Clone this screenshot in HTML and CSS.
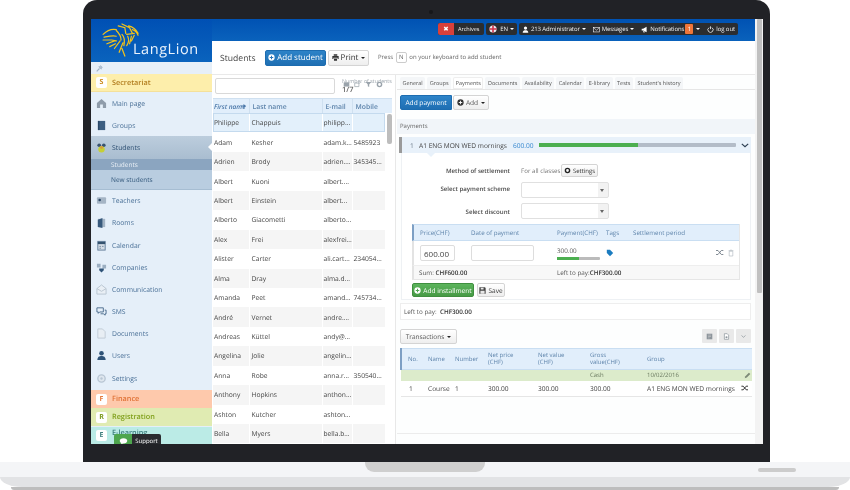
FILE: index.html
```html
<!DOCTYPE html>
<html lang="en">
<head>
<meta charset="utf-8">
<title>LangLion - Students</title>
<link rel="stylesheet" href="styles.css">
</head>
<body>
<div class="laptop">
  <div class="bezel">
    <div class="screen">
      <aside class="side">
        <div class="logo">
          <svg class="lion" viewBox="0 0 42 36" width="40" height="34" fill="none" stroke="#f2c21a" stroke-width="1.3" stroke-linecap="round">
            <path d="M1 12C5 8 10 6 15 7M2 15c5-1 9-2 13-1M1 18l9 0 5 1M5 22l8-3M8 25l6-3M17 3l7 2 1 6M21 1l8 4 3 6M28 3c5 1 8 4 10 8M32 7c3 1 5 3 6 6M15 8c3 3 5 6 5 10M21 12c3 3 3 7 2 12M13 27l6-8M18 31l4-10M24 35l-3-8M27 14c2 4 1 7-1 10M31 14l-2 8M34 13l-3 6M26 12l8-1"/>
          </svg>
          <span class="brand">LangLion</span>
        </div>
        <div class="pin">
          <svg viewBox="0 0 10 10" width="7" height="7"><path d="M1 9l4-4M4 2l4 4M6 1l3 3" stroke="#9fb1c4" stroke-width="1.6" fill="none"/></svg>
        </div>
        <div class="cat cat-s"><b class="letter">S</b>Secretariat</div>
        <nav class="menu">
          <a class="item"><svg class="ic" viewBox="0 0 12 12"><path d="M6 1L1 5.5V11h10V5.5zM4.5 7h3v4h-3z" fill="#8f9caa" fill-rule="evenodd"/></svg>Main page</a>
          <a class="item"><svg class="ic" viewBox="0 0 12 12"><path d="M2 1h8v10H2z" fill="#3d5f82"/><path d="M3 1v10" stroke="#24405c"/></svg>Groups</a>
          <a class="item item-on"><svg class="ic" viewBox="0 0 12 12"><circle cx="3.5" cy="3.5" r="2" fill="#39536f"/><circle cx="8.5" cy="3.5" r="2" fill="#39536f"/><circle cx="6" cy="8" r="3.5" fill="#c5cf35"/><circle cx="6" cy="6" r="1.6" fill="#d89a3d"/></svg>Students</a>
          <a class="sub sub-a">Students</a>
          <a class="sub sub-b">New students</a>
          <a class="item"><svg class="ic" viewBox="0 0 12 12"><rect x="1" y="2.5" width="10" height="7" rx="1" fill="#a5b5c5"/><circle cx="4" cy="5.5" r="1.4" fill="#2f4b68"/></svg>Teachers</a>
          <a class="item"><svg class="ic" viewBox="0 0 12 12"><path d="M2 2h8v9H2z" fill="#a3b4c5"/><path d="M2 3l5-2v11l-5-1z" fill="#37597c"/></svg>Rooms</a>
          <a class="item"><svg class="ic" viewBox="0 0 12 12"><rect x="2" y="1.5" width="8" height="9.5" fill="#d5dde6" stroke="#5f7b98"/><path d="M2 2h8v2.5H2z" fill="#35536f"/><path d="M4 7h1M7 7h1M4 9h1" stroke="#35536f"/></svg>Calendar</a>
          <a class="item"><svg class="ic" viewBox="0 0 12 12"><path d="M1 2h4v4H1zM7 3h4v4H7z" fill="#9cafc2"/><path d="M3.5 7h5v2L6 11.5 3.5 9z" fill="#2f5378"/></svg>Companies</a>
          <a class="item"><svg class="ic" viewBox="0 0 12 12"><path d="M1 5l5-4 5 4v6H1z" fill="#e9eff5" stroke="#b8c4d0"/><path d="M1 5l5 3 5-3" fill="none" stroke="#b8c4d0"/></svg>Communication</a>
          <a class="item"><svg class="ic" viewBox="0 0 12 12" fill="none" stroke="#47688a"><path d="M1 2h7v4.5H4L2.5 8V6.5H1z"/><path d="M9.5 4.500H11v4h-1V10L8 8.500H5"/></svg>SMS</a>
          <a class="item"><svg class="ic" viewBox="0 0 12 12"><path d="M2 1h5l3 3v7H2z" fill="#e8eef4" stroke="#bfcad5"/></svg>Documents</a>
          <a class="item"><svg class="ic" viewBox="0 0 12 12"><circle cx="6" cy="3.5" r="2.5" fill="#2f5378"/><path d="M1.500 11c0-3.500 2-4.500 4.500-4.500s4.500 1 4.500 4.500z" fill="#2f5378"/></svg>Users</a>
          <a class="item"><svg class="ic" viewBox="0 0 12 12"><circle cx="6" cy="6" r="4" fill="#dfe7ef" stroke="#b8c6d4" stroke-width="1.5"/><circle cx="6" cy="6" r="1.3" fill="#b8c6d4"/></svg>Settings</a>
        </nav>
        <div class="cat cat-f"><b class="letter">F</b>Finance</div>
        <div class="cat cat-r"><b class="letter">R</b>Registration</div>
        <div class="cat cat-e"><b class="letter">E</b><span class="elearn">E-learning</span></div>
        <div class="support">
          <span class="sup-ic"><svg viewBox="0 0 12 12" width="9" height="9"><path d="M6 1.5c3 0 5 1.500 5 3.500s-2 3.500-5 3.500H5L3 10.500V8C2 7.500 1 6.300 1 5c0-2 2-3.500 5-3.500z" fill="#fff"/></svg></span>
          <span class="sup-tx">Support</span>
        </div>
      </aside>

      <main class="main">
        <header class="topbar">
          <div class="tb-group"><span class="tb-x">✖</span><span class="tb-cell tb-arch">Archives</span></div>
          <div class="tb-group"><span class="tb-cell"><svg class="flag" viewBox="0 0 10 10"><circle cx="5" cy="5" r="4.5" fill="#e9e9ef"/><path d="M5 .5v9M.5 5h9" stroke="#d2334a" stroke-width="2"/></svg>EN<i class="caret"></i></span></div>
          <div class="tb-group tb-wide">
            <span class="tb-cell"><svg class="tb-ic" viewBox="0 0 10 10"><circle cx="5" cy="3" r="2.3" fill="#fff"/><path d="M1 9.500C1 6.500 3 6 5 6s4 .5 4 3.500z" fill="#fff"/></svg>213 Administrator<i class="caret"></i></span>
            <span class="tb-cell"><svg class="tb-ic" viewBox="0 0 10 10" fill="none" stroke="#fff" stroke-width=".8"><rect x=".5" y="2" width="9" height="6.5"/><path d="M.5 2L5 6l4.500-4"/></svg>Messages<i class="caret"></i></span>
            <span class="tb-cell"><svg class="tb-ic" viewBox="0 0 10 10"><path d="M1 4h2l5-3v8L3 6.500H1zM3 7l1 2.500h1L4.500 7z" fill="#fff"/></svg>Notifications<em class="badge">1</em><i class="caret"></i></span>
            <span class="tb-cell"><svg class="tb-ic" viewBox="0 0 10 10" fill="none" stroke="#fff" stroke-width="1.1"><path d="M3 2.300a3.700 3.700 0 1 0 4 0M5 .5v4"/></svg>log out</span>
          </div>
        </header>

        <div class="page">
          <div class="titlebar">
            <h1 class="title">Students</h1>
            <button class="btn btn-blue btn-add"><svg class="bi" viewBox="0 0 10 10"><circle cx="5" cy="5" r="4.5" fill="#fff"/><path d="M5 2.500v5M2.500 5h5" stroke="#2473b8" stroke-width="1.4"/></svg>Add student</button>
            <button class="btn btn-print"><svg class="bi" viewBox="0 0 10 10"><path d="M2.500.5h5v2h-5zM.5 3h9v4H8V5.500H2V7H.5zM2.800 6.300h4.400v3.200H2.800z" fill="#333"/></svg>Print<i class="caret dark"></i></button>
            <span class="hint">Press <kbd class="key">N</kbd> on your keyboard to add student</span>
          </div>

          <div class="cols">
            <section class="list">
              <div class="listtools">
                <input class="search" type="text" aria-label="Search">
                <div class="count"><span class="count-l">Number of students</span><span class="count-n">1/7</span></div>
                <div class="tools">
                  <svg viewBox="0 0 10 10"><path d="M1 2h8v6H1z" fill="#9aa3ab"/></svg>
                  <svg viewBox="0 0 10 10" fill="none" stroke="#9aa3ab"><path d="M1 3h6v5H1zM7 4l2-2"/></svg>
                  <svg viewBox="0 0 10 10"><path d="M1 1.500h8L6 5v3.500L4 7.500V5z" fill="#9aa3ab"/></svg>
                  <svg viewBox="0 0 10 10"><circle cx="5" cy="5" r="3" fill="none" stroke="#9aa3ab" stroke-width="2"/></svg>
                </div>
              </div>
              <div class="tablewrap">
                <table class="students">
                  <thead><tr><th class="c1 sorted">First name<svg class="sortarrow" viewBox="0 0 10 8"><path d="M0 3h5V0l5 4-5 4V5H0z" fill="#4a77a8"/></svg></th><th class="c2">Last name</th><th class="c3">E-mail</th><th class="c4">Mobile</th></tr></thead>
                  <tbody>
                    <tr class="sel"><td>Philippe</td><td>Chappuis</td><td>philipp...</td><td></td></tr>
                    <tr><td>Adam</td><td>Kesher</td><td>adam.k...</td><td>5485923</td></tr>
                    <tr><td>Adrien</td><td>Brody</td><td>adrien....</td><td>345345...</td></tr>
                    <tr><td>Albert</td><td>Kuoni</td><td>albert....</td><td></td></tr>
                    <tr><td>Albert</td><td>Einstein</td><td>albert...</td><td></td></tr>
                    <tr><td>Alberto</td><td>Giacometti</td><td>alberto...</td><td></td></tr>
                    <tr><td>Alex</td><td>Frei</td><td>alexfrei...</td><td></td></tr>
                    <tr><td>Alister</td><td>Carter</td><td>ali.cart...</td><td>234054...</td></tr>
                    <tr><td>Alma</td><td>Dray</td><td>alma.d...</td><td></td></tr>
                    <tr><td>Amanda</td><td>Peet</td><td>amand...</td><td>745734...</td></tr>
                    <tr><td>André</td><td>Vernet</td><td>andre....</td><td></td></tr>
                    <tr><td>Andreas</td><td>Küttel</td><td>andy@...</td><td></td></tr>
                    <tr><td>Angelina</td><td>Jolie</td><td>angelin...</td><td></td></tr>
                    <tr><td>Anna</td><td>Robe</td><td>anna.r...</td><td>350540...</td></tr>
                    <tr><td>Anthony</td><td>Hopkins</td><td>anthon...</td><td></td></tr>
                    <tr><td>Ashton</td><td>Kutcher</td><td>ashton...</td><td></td></tr>
                    <tr><td>Bella</td><td>Myers</td><td>bella.b...</td><td></td></tr>
                  </tbody>
                </table>
                <div class="vscroll"><div class="vhead"></div><div class="vthumb"></div></div>
              </div>
            </section>

            <section class="detail">
              <div class="tabs">
                <span class="tab">General</span><span class="tab">Groups</span><span class="tab tab-on">Payments</span><span class="tab">Documents</span><span class="tab">Availability</span><span class="tab">Calendar</span><span class="tab">E-library</span><span class="tab">Tests</span><span class="tab">Student's history</span>
              </div>
              <div class="actions">
                <button class="btn btn-blue btn-pay">Add payment</button>
                <button class="btn btn-addm"><svg class="bi" viewBox="0 0 10 10"><circle cx="5" cy="5" r="4.5" fill="#333"/><path d="M5 2.500v5M2.500 5h5" stroke="#fff" stroke-width="1.3"/></svg>Add<i class="caret dark"></i></button>
              </div>
              <div class="sectbar">Payments</div>
              <div class="payrow">
                <span class="pn">1</span><span class="pt">A1 ENG MON WED mornings</span><span class="pv">600.00</span>
                <span class="pbar"><span class="pfill"></span></span>
                <svg class="chev" viewBox="0 0 10 6" width="8" height="5"><path d="M1 1l4 3.500L9 1" fill="none" stroke="#2c3e50" stroke-width="1.5"/></svg>
              </div>
              <div class="paybody">
                <div class="frow frow-1"><label class="flab">Method of settlement</label><span class="fnote">For all classes</span><button class="btn btn-set"><svg class="bi" viewBox="0 0 10 10"><circle cx="5" cy="5" r="3" fill="none" stroke="#222" stroke-width="2"/></svg>Settings</button></div>
                <div class="frow frow-2"><label class="flab">Select payment scheme</label><span class="sel-box"><i class="sel-arrow"></i></span></div>
                <div class="frow frow-3"><label class="flab flab-d">Select discount</label><span class="sel-box"><i class="sel-arrow"></i></span></div>
                <div class="inst">
                  <div class="inst-h"><span class="w-a">Price(CHF)</span><span class="w-b">Date of payment</span><span class="w-c">Payment(CHF)</span><span class="w-d">Tags</span><span>Settlement period</span></div>
                  <div class="inst-r">
                    <span class="w-a"><input class="inp inp-p" type="text" value="600.00" aria-label="Price"></span>
                    <span class="w-b"><input class="inp inp-d" type="text" aria-label="Date"></span>
                    <span class="w-c"><span class="pay-v">300.00</span><span class="mini"><span class="mini-f"></span></span></span>
                    <span class="w-d"><svg viewBox="0 0 10 10" width="8" height="8"><path d="M1 1h4l4 4-4 4-4-4z" fill="#1b7cc0"/></svg></span>
                    <span class="rowicons">
                      <svg viewBox="0 0 12 10" width="8" height="7" fill="none" stroke="#66717c" stroke-width="1.2"><path d="M0 2h3l5 6h3M0 8h3l5-6h3"/></svg>
                      <svg viewBox="0 0 10 12" width="6" height="8" fill="none" stroke="#aab2ba"><path d="M2 3h6v8H2zM1 2h8M4 1h2"/></svg>
                    </span>
                  </div>
                  <div class="inst-s"><span class="w-ab">Sum: <b>CHF600.00</b></span><span>Left to pay:<b>CHF300.00</b></span></div>
                </div>
                <div class="instbtns">
                  <button class="btn btn-green"><svg class="bi" viewBox="0 0 10 10"><circle cx="5" cy="5" r="4.5" fill="#fff"/><path d="M5 2.500v5M2.500 5h5" stroke="#4ea64e" stroke-width="1.4"/></svg>Add installment</button>
                  <button class="btn btn-save"><svg class="bi" viewBox="0 0 10 10"><path d="M.5.5h8l1 1v8h-9z" fill="#444"/><path d="M2.500 1h4v2.500h-4zM2 5.500h6v4H2z" fill="#e8e8e8"/></svg>Save</button>
                </div>
              </div>
              <div class="leftpay">Left to pay: &nbsp;<b>CHF300.00</b></div>
              <div class="transbar">
                <button class="btn btn-trans">Transactions<i class="caret dark"></i></button>
                <span class="transicons">
                  <span class="gbtn"><svg viewBox="0 0 10 10" width="7" height="7"><path d="M1 1h8v8H1z" fill="#8d959c"/><path d="M3 3h4M3 5h4M3 7h2" stroke="#ddd" stroke-width=".7"/></svg></span>
                  <span class="gbtn"><svg viewBox="0 0 10 10" width="7" height="7"><path d="M2 1h4l2 2v6H2z" fill="#fff" stroke="#8d959c"/><circle cx="5" cy="6" r="1.5" fill="#8d959c"/></svg></span>
                  <span class="gbtn"><svg viewBox="0 0 10 6" width="5" height="3"><path d="M1 1l4 3.500L9 1" fill="none" stroke="#8d959c" stroke-width="1.5"/></svg></span>
                </span>
              </div>
              <table class="trans">
                <thead><tr><th class="t1">No.</th><th class="t2">Name</th><th class="t3">Number</th><th class="t4">Net price<br>(CHF)</th><th class="t5">Net value<br>(CHF)</th><th class="t6">Gross<br>value(CHF)</th><th class="t7">Group</th><th class="t8"></th></tr></thead>
                <tbody>
                  <tr class="cash"><td colspan="5"></td><td>Cash</td><td>10/02/2016</td><td class="t8"><svg viewBox="0 0 10 10" width="7" height="7"><path d="M1 9l1-3 5-5 2 2-5 5z" fill="#7d8a78"/></svg></td></tr>
                  <tr class="course"><td>1</td><td>Course</td><td>1</td><td>300.00</td><td>300.00</td><td>300.00</td><td>A1 ENG MON WED mornings</td><td class="t8"><svg viewBox="0 0 12 10" width="8" height="6" fill="none" stroke="#222" stroke-width="1.5"><path d="M0 2h3l5 6h3M0 8h3l5-6h3"/></svg></td></tr>
                </tbody>
              </table>
              <div class="fill"></div>
              <div class="endline"></div>
            </section>
          </div>
        </div>
      </main>
      <div class="pagescroll"><div class="pagethumb"></div></div>
    </div>
    <span class="cam"></span>
  </div>
  <div class="base">
    <div class="base-top"><span class="notch"></span><span class="vent"></span></div>
    <div class="base-low"></div>
    <div class="base-shadow"></div>
  </div>
</div>
</body>
</html>
```

FILE: styles.css
```css
* { box-sizing: border-box; }
html, body { margin: 0; height: 490px; overflow: hidden; background: #fff; }
body { font-family: "Open Sans", "Liberation Sans", sans-serif; font-size: 6.7px; color: #444; text-rendering: geometricPrecision; }
svg { display: block; flex: none; }

.laptop { width: 850px; height: 490px; display: flex; flex-direction: column; align-items: flex-start; }
.bezel { position: relative; width: 687px; height: 462px; margin-left: 83px; padding: 19px 7px 18px 8px; background: #212226; border-radius: 14px 14px 0 0 / 14px 14px 6px 6px; }
.cam { position: absolute; left: 346px; top: 10px; width: 4px; height: 4px; border-radius: 50%; background: #16171a; }
.screen { position: relative; display: flex; width: 672px; height: 425px; overflow: hidden; background: #fff; filter: blur(.3px); }

/* base */
.base { width: 850px; height: 28px; display: flex; flex-direction: column; align-items: center; }
.base-top { position: relative; width: 100%; height: 15px; background: #f4f5f7; }
.notch { position: absolute; left: 365px; top: 0; width: 120px; height: 10px; background: #cfcfcf; border-radius: 0 0 9px 9px; }
.vent { position: absolute; left: 758px; top: 6px; width: 38px; height: 4px; background: #cccccc; border-radius: 2px; }
.base-low { width: 100%; height: 10px; background: #e2e3e5; border-radius: 0 0 22px 22px / 0 0 10px 10px; }
.base-shadow { width: 828px; height: 3px; background: #bdbdbd; border-radius: 0 0 8px 8px; }

/* sidebar */
.side { position: relative; flex: none; width: 121px; display: flex; flex-direction: column; background: #e5eff9; overflow: hidden; }
.logo { flex: none; height: 43px; display: flex; align-items: flex-end; padding: 0 0 4px 12px; background: linear-gradient(#0050b4, #0a63bd); position: relative; }
.lion { position: absolute; left: 11px; top: 4px; }
.brand { margin-left: 30px; font-size: 14.5px; line-height: 17px; letter-spacing: .55px; color: #eaf3fc; }
.pin { flex: none; height: 12px; padding: 3px 0 0 5px; background: #e6eff8; }
.cat { height: 18px; flex: none; display: flex; align-items: center; padding-left: 5px; font-size: 7.3px; font-weight: 600; }
.letter { width: 11px; height: 11px; margin-right: 5px; flex: none; border-radius: 2px; background: #fff; font-size: 7px; line-height: 11px; text-align: center; font-weight: 700; }
.cat-s { background: #fdeeab; color: #b27d1e; border-bottom: 1px solid #f4e09a; }
.cat-s .letter { color: #cc8b1e; }
.cat-f { background: #fec9ac; color: #df7034; }
.cat-f .letter { color: #e57a3c; }
.cat-r { background: #e0ebb2; color: #80a01c; }
.cat-r .letter { color: #7f9c22; }
.cat-e { background: #bbebe6; color: #3a7d7c; margin-top: 1px; align-items: flex-start; padding-top: 3px; }
.cat-e .letter { color: #3d7e7d; }
.elearn { line-height: 8px; margin-top: -1px; }
.menu { flex: none; height: 298px; display: flex; flex-direction: column; }
.item { flex: none; height: 22.2px; display: flex; align-items: center; padding-left: 5px; font-size: 6.8px; color: #4a7097; }
.ic { width: 11px; height: 11px; margin-right: 5px; }
.item-on { position: relative; background: linear-gradient(#bccddd, #a9bdd0); color: #2d4f72; }
.item-on::after { content: ""; position: absolute; right: 0; top: 7px; border: 4px solid transparent; border-right: 4px solid #fff; border-left: 0; }
.sub { flex: none; display: flex; align-items: center; padding-left: 20px; font-size: 6.5px; }
.sub-a { height: 11px; background: #8ba5c0; color: #eaf0f6; }
.sub-b { height: 20px; background: #b9cde0; color: #33587b; border-bottom: 1px solid #a6bdd2; }
.support { position: absolute; left: 23px; top: 415px; height: 15px; display: flex; }
.sup-ic { width: 18px; display: flex; align-items: center; justify-content: center; background: #4ea64e; border-radius: 2px 0 0 0; }
.sup-tx { width: 29px; text-align: center; background: #2a2c30; color: #fff; font-size: 6px; line-height: 15px; border-radius: 0 2px 0 0; }

/* main */
.main { flex: none; width: 543px; display: flex; flex-direction: column; }
.topbar { flex: none; height: 22px; display: flex; justify-content: flex-end; align-items: flex-start; gap: 2px; padding: 4px 17px 0 0; background: linear-gradient(#0052b3, #0a62bc); }
.tb-group { height: 12px; display: flex; background: #2b2d30; border-radius: 2px; color: #f0f0f0; font-size: 6px; line-height: 12px; }
.tb-x { width: 16px; text-align: center; background: #d9403a; color: #fff; border-radius: 2px 0 0 2px; font-size: 6.5px; }
.tb-cell { display: flex; align-items: center; padding: 0 3px; white-space: nowrap; letter-spacing: -.1px; }
.tb-arch { padding: 0 5px 0 4px; font-size: 5.6px; }
.tb-wide { gap: 1px; }
.flag, .tb-ic { width: 7px; height: 7px; margin-right: 2px; }
.flag { width: 8px; height: 8px; margin-right: 3px; }
.badge { display: block; width: 8px; height: 10px; margin: 0 1px; background: #f0763a; color: #fff; font-size: 6px; font-style: normal; line-height: 10px; text-align: center; border-radius: 1px; }
.caret { display: block; margin-left: 2px; border: 2px solid transparent; border-top: 2px solid #fff; border-bottom: 0; }
.caret.dark { border-top-color: #222; margin-left: 3px; }

.page { flex: 1; display: flex; flex-direction: column; min-height: 0; background: #fff; border-radius: 3px 0 0 0; margin-top: 0; }
.titlebar { flex: none; height: 34px; display: flex; align-items: center; padding: 0 0 0 8px; border-bottom: 1px solid #e9e9e9; }
.title { margin: 0 9px 0 0; width: 36px; flex: none; font-size: 8.6px; font-weight: 400; color: #444; white-space: nowrap; }
.btn { display: inline-flex; align-items: center; justify-content: center; padding: 0; border: 1px solid #d4d4d4; border-radius: 2px; background: linear-gradient(#fff, #eeeeee); color: #333; font-family: inherit; font-size: 6.7px; white-space: nowrap; text-rendering: geometricPrecision; }
.bi { width: 7px; height: 7px; margin-right: 2px; }
.btn-blue { border: 1px solid #1c6cb0; background: linear-gradient(#2d83c8, #1f6fb3); color: #fff; }
.btn-add { flex: none; width: 61px; height: 16px; font-size: 8px; margin-right: 2px; }
.btn-print { flex: none; width: 41px; height: 16px; font-size: 8px; margin-right: 9px; }
.hint { font-size: 6px; color: #666; white-space: nowrap; }
.key { display: inline-block; width: 11px; height: 11px; border: 1px solid #ccc; border-radius: 2px; font-family: inherit; font-size: 6px; line-height: 9px; text-align: center; margin: 0 1px; }

.cols { flex: 1; display: flex; min-height: 0; }
.list { flex: none; width: 180px; display: flex; flex-direction: column; padding: 3px 0 0 1px; }
.listtools { flex: none; height: 20px; display: flex; position: relative; padding: 0 0 0 2px; }
.search { width: 120px; height: 16px; border: 1px solid #d9d9d9; border-radius: 2px; }
.count { position: absolute; left: 129px; top: 0; width: 50px; display: flex; flex-direction: column; align-items: flex-start; color: #9aa3ab; }
.count-l { font-size: 5.3px; line-height: 6px; white-space: nowrap; }
.count-n { margin-top: 2px; font-size: 7.5px; line-height: 8px; color: #666; font-weight: 600; }
.tools { position: absolute; left: 130px; top: 3px; display: flex; gap: 4px; }
.tools svg { width: 7px; height: 7px; }
.tablewrap { flex: 1; position: relative; overflow: hidden; min-height: 0; }
.students { width: 172px; border-collapse: collapse; table-layout: fixed; }
.students th { height: 14.5px; padding: 0 0 0 3px; background: #e1eefb; border-right: 1px solid #cfe0f0; border-top: 1px solid #cfe0f0; text-align: left; font-weight: 600; color: #5e84ab; font-size: 6.8px; white-space: nowrap; overflow: hidden; }
.c1 { width: 36px; } .c2 { width: 73px; } .c3 { width: 30px; } .c4 { width: 33px; }
.students th.sorted { position: relative; padding-left: 1px; font-style: italic; font-size: 6.5px; color: #4a77a8; }
.sortarrow { position: absolute; right: 3px; top: 5px; width: 5px; height: 4px; }
.students td { height: 19.45px; padding: 0 0 0 1px; white-space: nowrap; overflow: hidden; color: #444; font-size: 6.7px; border-right: 1px solid #fff; }
.students td:nth-child(2) { padding-left: 2px; }
.students tbody tr { background: #fff; }
.students tbody tr:nth-child(odd) { background: #f5f5f5; }
.students tbody tr.sel { background: #e3f0fb; outline: 1px solid #c4daee; outline-offset: -1px; }
.vscroll { position: absolute; left: 172px; top: 0; width: 8px; bottom: 0; background: #fff; }
.vhead { height: 14.5px; background: #e1eefb; border-top: 1px solid #cfe0f0; margin-bottom: 1px; }
.vthumb { width: 5px; height: 30px; margin-left: 2px; background: #bdbdbd; border-radius: 2px; }

.detail { flex: none; width: 360px; margin-left: 3px; display: flex; flex-direction: column; border-left: 1px solid #e8e8e8; padding: 0 0 0 1px; background: #fdfefe; }
.tabs { flex: none; height: 15px; display: flex; align-items: flex-end; gap: 2px; padding: 3px 0 0 3px; border-bottom: 1px solid #e6e6e6; }
.tab { height: 12px; padding: 0 2.5px; line-height: 12px; font-size: 5.5px; color: #555; background: #f4f6f8; border-radius: 2px 2px 0 0; white-space: nowrap; }
.tab-on { background: #fff; box-shadow: inset 0 0 0 1px #eee; }
.actions { flex: none; height: 29px; display: flex; padding: 5px 0 0 3px; gap: 1px; }
.btn-pay { width: 52px; height: 15px; font-size: 6.6px; border-radius: 2px 0 0 2px; }
.btn-addm { width: 36px; height: 15px; font-size: 6.6px; color: #555; }
.sectbar { flex: none; height: 15px; line-height: 15px; padding-left: 3px; background: #f1f5f9; color: #666; font-size: 6px; }
.payrow { flex: none; height: 16px; margin: 3px 4px 0 2px; display: flex; align-items: center; background: #e8f1fa; border-left: 3px solid #9a9a9a; }
.pn { flex: none; width: 17px; padding-left: 8px; color: #6c7a88; font-size: 6.6px; }
.pt { flex: none; width: 94px; font-size: 6.6px; color: #444; white-space: nowrap; }
.pv { flex: none; width: 26px; color: #3a8ad0; font-size: 6.6px; }
.pbar { display: block; width: 197px; height: 4px; background: #b3bcc8; border-radius: 1px; margin-right: 5px; }
.pfill { display: block; width: 99px; height: 4px; background: #4caf50; }
.paybody { flex: none; height: 147px; margin: 0 4px 0 4px; padding: 11px 0 0 10px; border: 1px solid #eef1f4; border-top: 0; position: relative; background: #fff; }
.paybody::before { content: ""; position: absolute; left: 25px; top: 0; border: 4px solid transparent; border-top: 4px solid #e8f1fa; border-bottom: 0; }
.frow { display: flex; align-items: center; height: 16px; }
.flab { flex: none; width: 98px; text-align: right; margin-right: 11px; font-weight: 600; color: #4a4a4a; font-size: 6.1px; white-space: nowrap; }
.frow-1 { height: 13px; }
.frow-2 { margin-top: 5px; }
.frow-2 .flab { padding-bottom: 4px; }
.frow-3 { margin-top: 5px; }
.fnote { flex: none; width: 40px; font-size: 6.2px; color: #777; white-space: nowrap; }
.btn-set { width: 37px; height: 13px; font-size: 6px; }
.sel-box { display: block; width: 88px; height: 16px; border: 1px solid #e0e0e0; border-radius: 2px; background: linear-gradient(to right, #fff 76px, #f2f2f2 76px); position: relative; }
.sel-arrow { position: absolute; right: 4px; top: 6px; border: 2px solid transparent; border-top: 3px solid #666; border-bottom: 0; }
.inst { width: 328px; margin: 5px 0 0 0; border: 1px solid #e6e6e6; border-left: 0; border-top: 0; background: #fff; }
.inst > div { display: flex; align-items: center; }
.inst-h { height: 17px; background: #e1eefb; border-left: 2px solid #7d9fc4; border-top: 1px solid #c9def2; border-bottom: 1px solid #c9def2; color: #5e84ab; font-size: 6.2px; }
.inst-r { height: 24px; position: relative; border-left: 2px solid #e3e3e3; }
.inst-s { height: 14px; background: #f8f8f8; border-top: 1px solid #eee; font-size: 6.3px; color: #555; border-left: 2px solid #e3e3e3; }
.inst-s b { font-weight: 600; color: #333; }
.w-a { flex: none; width: 57px; padding-left: 6px; }
.w-b { flex: none; width: 86px; }
.w-c { flex: none; width: 49px; display: flex; flex-direction: column; }
.w-d { flex: none; width: 27px; }
.w-ab { flex: none; width: 143px; padding-left: 5px; }
.inp { display: block; height: 16px; border: 1px solid #ddd; border-radius: 2px; font-family: inherit; font-size: 8px; color: #444; padding: 0 3px; }
.inp-p { width: 35px; }
.inp-d { width: 63px; }
.pay-v { font-size: 6.3px; line-height: 8px; color: #555; }
.mini { display: block; width: 43px; height: 3px; margin-top: 2px; background: #bbb; border-radius: 1px; }
.mini-f { display: block; width: 22px; height: 3px; background: #4caf50; }
.rowicons { position: absolute; right: 5px; top: 8px; display: flex; gap: 4px; }
.instbtns { display: flex; gap: 3px; margin-top: 3px; }
.btn-green { width: 62px; height: 14px; background: linear-gradient(#5cb45c, #469a46); border-color: #3f8f3f; color: #fff; font-size: 6.6px; }
.btn-save { width: 28px; height: 14px; font-size: 6.5px; }
.leftpay { flex: none; height: 17px; margin: 3px 4px 0 3px; padding-left: 3px; line-height: 16px; border: 1px solid #eee; background: #fff; font-size: 6.3px; color: #555; }
.leftpay b { font-weight: 600; color: #333; }
.transbar { flex: none; height: 19px; margin: 9px 4px 0 3px; display: flex; justify-content: space-between; align-items: flex-start; }
.btn-trans { width: 57px; height: 15px; font-size: 6.5px; color: #555; }
.transicons { display: flex; gap: 2px; }
.gbtn { width: 15px; height: 14px; display: flex; align-items: center; justify-content: center; background: #e9e9e9; border-radius: 1px; }
.trans { flex: none; width: 351px; margin-left: 3px; border-collapse: collapse; table-layout: fixed; font-size: 6.6px; background: #fff; }
.trans th { height: 21px; padding: 0 0 0 6px; font-weight: 400; font-size: 6px; line-height: 7px; text-align: left; background: #e1eefb; color: #5e84ab; border-top: 1px solid #c9def2; border-bottom: 1px solid #c9def2; }
.trans th.t1 { border-left: 2px solid #7d9fc4; width: 21px; }
.t2 { width: 27px; } .t3 { width: 33px; } .t4 { width: 50px; } .t5 { width: 52px; } .t6 { width: 57px; } .t7 { width: 95px; } .t8 { width: 16px; }
.trans td { padding: 0 0 0 6px; white-space: nowrap; color: #444; }
.cash td { height: 11px; background: #dcebcb; font-size: 6px; color: #6a7a60; }
.course td { height: 16px; border-bottom: 1px solid #e6e6e6; }
.course td:first-child { padding-left: 8px; }
.trans td.t8 { padding: 0 0 0 8px; }
.trans .course td.t8 { padding-left: 5px; }
.fill { flex: 1; }
.endline { flex: none; height: 11px; border-top: 1px solid #ececec; }
.pagescroll { flex: none; width: 8px; background: #f3f3f3; padding: 0 1px 0 2px; }
.pagethumb { width: 5px; height: 274px; background: #c0c0c0; border-radius: 1px; }
```
